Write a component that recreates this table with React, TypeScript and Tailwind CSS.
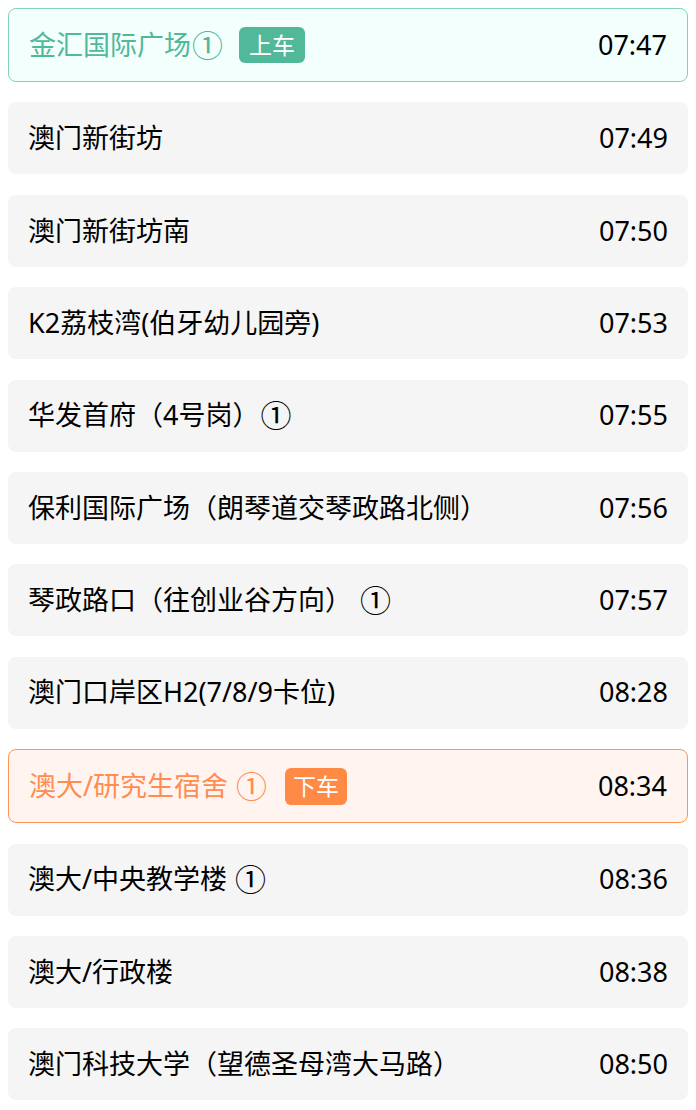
const stops = [
  { name: "金汇国际广场①", time: "07:47", tag: "up" },
  { name: "澳门新街坊", time: "07:49" },
  { name: "澳门新街坊南", time: "07:50" },
  { name: "K2荔枝湾(伯牙幼儿园旁)", time: "07:53" },
  { name: "华发首府（4号岗）①", time: "07:55" },
  { name: "保利国际广场（朗琴道交琴政路北侧）", time: "07:56" },
  { name: "琴政路口（往创业谷方向） ①", time: "07:57" },
  { name: "澳门口岸区H2(7/8/9卡位)", time: "08:28" },
  { name: "澳大/研究生宿舍 ①", time: "08:34", tag: "down" },
  { name: "澳大/中央教学楼 ①", time: "08:36" },
  { name: "澳大/行政楼", time: "08:38" },
  { name: "澳门科技大学（望德圣母湾大马路）", time: "08:50" },
];

// ① drawn a bit larger, as in the reference
const Name = ({ text, color }: { text: string; color: string }) => {
  const parts = text.split("①");
  return (
    <span className={`text-[27px] ${color} flex items-center`}>
      <span className="whitespace-pre">{parts[0]}</span>
      {parts.length > 1 && <span className="text-[31px] leading-none ml-px">①</span>}
    </span>
  );
};

export default function App() {
  return (
    <div
      className="w-[696px] bg-white px-2 pt-2 flex flex-col gap-[20.4px]"
      style={{ fontFamily: '"Noto Sans", "Noto Sans CJK SC", sans-serif' }}
    >
      {stops.map((s) => {
        if (s.tag === "up") {
          return (
            <div
              key={s.name}
              className="h-[74px] rounded-lg border border-[#82d2bb] bg-[#f2fffc] flex items-center justify-between px-5"
            >
              <div className="flex items-center gap-4">
                <Name text={s.name} color="text-[#52b89a]" />
                <span className="h-9 px-2.5 rounded-md bg-[#52b89a] text-white text-[23px] flex items-center">
                  上车
                </span>
              </div>
              <span className="text-[27px] text-black">{s.time}</span>
            </div>
          );
        }
        if (s.tag === "down") {
          return (
            <div
              key={s.name}
              className="h-[74px] rounded-lg border border-[#ff9352] bg-[#fff4f0] flex items-center justify-between px-5"
            >
              <div className="flex items-center gap-[18px]">
                <Name text={s.name} color="text-[#ff8c50]" />
                <span className="h-[37px] px-2 rounded-md bg-[#ff8a45] text-white text-[23px] flex items-center">
                  下车
                </span>
              </div>
              <span className="text-[27px] text-black">{s.time}</span>
            </div>
          );
        }
        return (
          <div
            key={s.name}
            className="h-[72px] rounded-lg bg-[#f5f5f5] flex items-center justify-between px-5"
          >
            <Name text={s.name} color="text-black" />
            <span className="text-[27px] text-black">{s.time}</span>
          </div>
        );
      })}
    </div>
  );
}
